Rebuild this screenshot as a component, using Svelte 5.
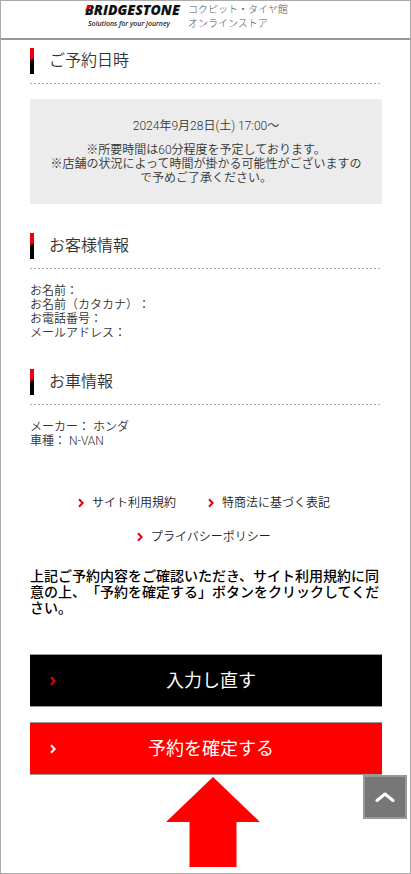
<script lang="ts">
  const customer = ['お名前：', 'お名前（カタカナ）：', 'お電話番号：', 'メールアドレス：']
  const car = ['メーカー： ホンダ', '車種： N-VAN']
  const links = ['サイト利用規約', '特商法に基づく表記', 'プライバシーポリシー']
</script>

{#snippet chevron()}
  <svg class="chevron" viewBox="0 0 6 10" aria-hidden="true">
    <path d="M1 1.2 4.6 5 1 8.8" />
  </svg>
{/snippet}

<div class="page">
  <header>
    <a class="brand" href="#top">
      <span class="logo">
        BRIDGESTONE
        <svg viewBox="0 0 10 8" aria-hidden="true">
          <path d="M3.2 0H9.6L0 7.6Z" />
        </svg>
      </span>
      <span class="tagline">Solutions for your journey</span>
    </a>
    <p class="store">コクピット・タイヤ館<br />オンラインストア</p>
  </header>

  <main>
    <section>
      <h2>ご予約日時</h2>
      <div class="schedule">
        <p>2024年9月28日(土) 17:00〜</p>
        <p>
          ※所要時間は60分程度を予定しております。<br />
          ※店舗の状況によって時間が掛かる可能性がございますので予めご了承ください。
        </p>
      </div>
    </section>

    <section>
      <h2>お客様情報</h2>
      {#each customer as line}
        <p>{line}</p>
      {/each}
    </section>

    <section>
      <h2>お車情報</h2>
      {#each car as line}
        <p>{line}</p>
      {/each}
    </section>

    <nav>
      {#each links as link}
        <a href="#terms">{@render chevron()}{link}</a>
      {/each}
    </nav>

    <p class="confirm">
      上記ご予約内容をご確認いただき、サイト利用規約に同意の上、「予約を確定する」ボタンをクリックしてください。
    </p>

    <div class="actions">
      <button type="button" class="back">{@render chevron()}入力し直す</button>
      <button type="button" class="submit">{@render chevron()}予約を確定する</button>
    </div>

    <div class="pointer" aria-hidden="true">
      <svg viewBox="0 0 94 90"><path d="M47 0 94 45H70.500V90H23.500V45H0Z" /></svg>
    </div>
  </main>

  <button type="button" class="to-top" aria-label="ページの先頭へ">
    <svg viewBox="0 0 20 12" aria-hidden="true"><path d="M2 9.500 10 3 18 9.500" /></svg>
  </button>
</div>

<style>
  :global(body) {
    margin: 0;
    background: #fff;
  }

  .page {
    box-sizing: border-box;
    min-height: 100vh;
    border: 1px solid #aaa;
    color: #333;
    font: 350 12px/14px Roboto, 'Noto Sans CJK JP', sans-serif;
    text-spacing-trim: space-all;
  }

  p,
  h2 {
    margin: 0;
  }

  a {
    color: inherit;
    text-decoration: none;
  }

  header {
    display: flex;
    gap: 8px;
    height: 37px;
    padding-left: 84px;
    border-bottom: 2px solid #999;
  }

  .brand {
    display: flex;
    flex-direction: column;
    gap: 2px;
    padding-top: 2px;
    color: #111;
    white-space: nowrap;
  }

  .logo {
    position: relative;
    width: 95px;
    font: italic 800 14px/14px 'Open Sans', sans-serif;
  }

  .logo svg {
    position: absolute;
    top: 2px;
    left: 0;
    width: 8px;
    height: 7px;
    fill: #e60012;
  }

  .tagline {
    padding-left: 3px;
    font: italic 500 7px/10px 'Noto Sans', sans-serif;
  }

  .store {
    padding-top: 2px;
    color: #555;
    font-size: 10px;
    font-weight: 300;
    line-height: 14px;
  }

  main {
    padding: 8px 28px 6px 29px;
  }

  section {
    margin-bottom: 29px;
  }

  h2 {
    display: flex;
    align-items: center;
    gap: 15px;
    height: 26px;
    padding-bottom: 10px;
    margin-bottom: 15px;
    background: repeating-linear-gradient(90deg, #aaa 0 2px, transparent 2px 4px) bottom / 100% 1px no-repeat;
    font-size: 16px;
    font-weight: 350;
  }

  h2::before {
    content: '';
    width: 4px;
    height: 26px;
    background: linear-gradient(160deg, #e60012 40%, #000 50%);
  }

  .schedule {
    display: grid;
    gap: 10px;
    padding: 20px 16px 19px;
    background: #ececec;
    text-align: center;
  }

  nav {
    display: flex;
    flex-wrap: wrap;
    justify-content: center;
    gap: 20px 32px;
    margin-top: 48px;
    padding-right: 4px;
    color: #222;
  }

  nav a {
    display: flex;
    align-items: center;
    gap: 8px;
  }

  .chevron {
    width: 6px;
    height: 10px;
    fill: none;
    stroke: #e60012;
    stroke-width: 2;
  }

  .confirm {
    margin: 24px 0 38px;
    color: #000;
    font-size: 14px;
    font-weight: 500;
    line-height: 16px;
  }

  .actions {
    display: grid;
    gap: 15px;
  }

  .actions button {
    display: grid;
    grid-template-columns: 10px 1fr;
    align-items: center;
    height: 53px;
    padding: 0 20px;
    border: 1px solid #999;
    border-width: 1px 0;
    color: #fff;
    font: 400 18px/24px Roboto, 'Noto Sans CJK JP', sans-serif;
  }

  .actions .back {
    background: #000;
  }

  .actions .submit {
    background: #f00;
  }

  .submit .chevron {
    stroke: #fff;
  }

  .pointer {
    display: flex;
    justify-content: center;
    padding: 2px 0 0 14px;
  }

  .pointer svg {
    width: 94px;
    height: 90px;
    fill: #f00;
  }

  .to-top {
    position: fixed;
    right: 4px;
    bottom: 55px;
    display: grid;
    place-items: center;
    width: 44px;
    height: 44px;
    padding: 0;
    border: 2px solid #999;
    background: #777;
  }

  .to-top svg {
    width: 20px;
    height: 12px;
    fill: none;
    stroke: #fff;
    stroke-width: 3;
    stroke-linecap: round;
    stroke-linejoin: round;
  }
</style>
